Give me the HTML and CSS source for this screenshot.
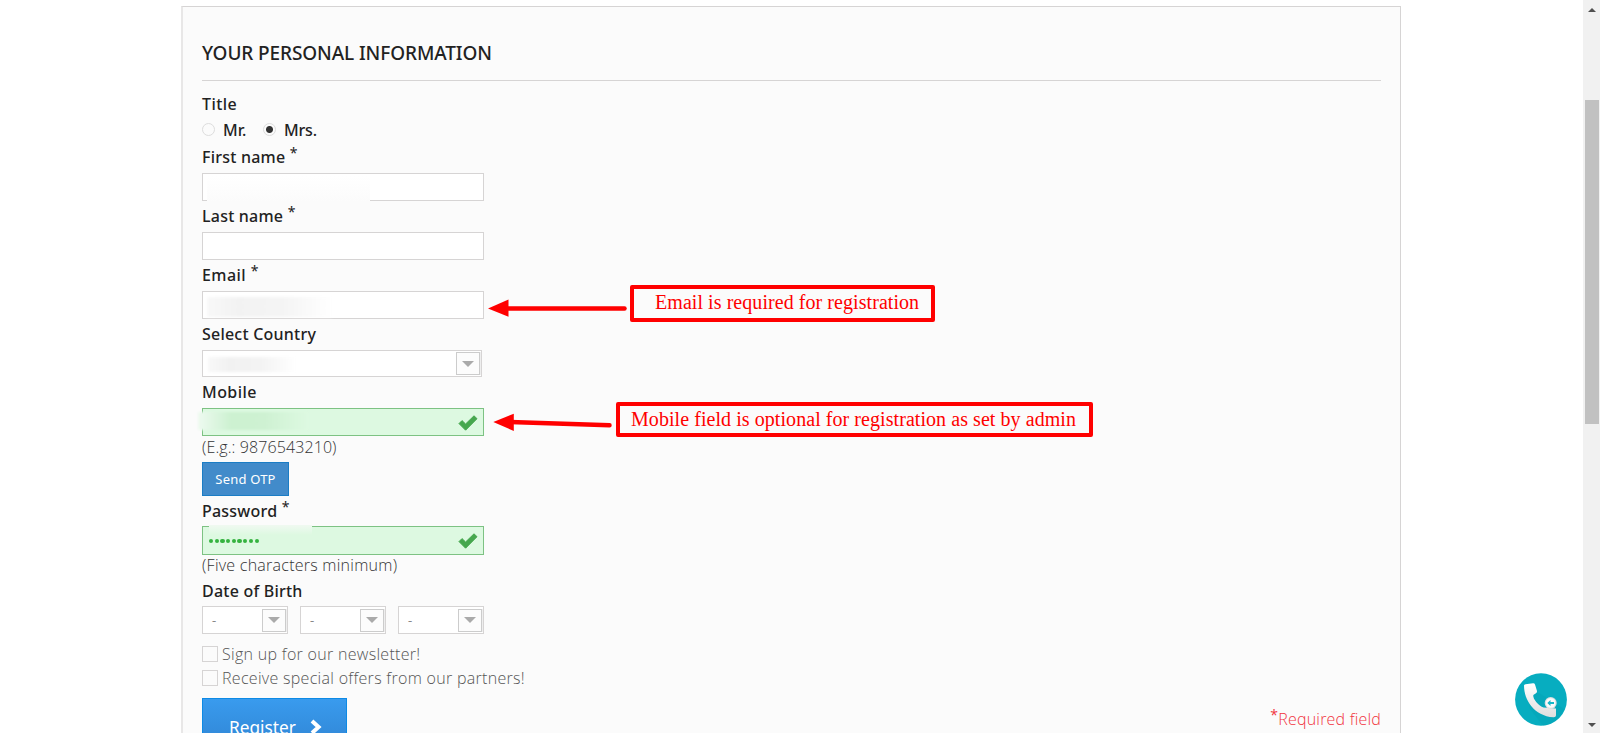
FILE: index.html
```
<!DOCTYPE html>
<html lang="en">
  <head>
    <meta charset="UTF-8" />
    <meta name="viewport" content="width=device-width, initial-scale=1.0" />
    <title>Create an account</title>
    <link rel="stylesheet" href="styles.css">
  </head>
  <body>
    <div class="page">
      <form class="account-form">
        <h3 class="page-subheading">Your personal information</h3>

        <div class="label title-label wide">Title</div>
        <div class="radio-row">
          <span class="radio"></span><label class="mr">Mr.</label>
          <span class="radio checked"></span><label class="mrs">Mrs.</label>
        </div>

        <div class="label">First name <sup>*</sup></div>
        <div class="field"><div class="smudge smudge-first"></div></div>

        <div class="label">Last name <sup>*</sup></div>
        <div class="field"></div>

        <div class="label wide">Email <sup>*</sup></div>
        <div class="field"><div class="smudge smudge-email"></div></div>

        <div class="label">Select Country</div>
        <div class="select country">
          <div class="smudge smudge-country"></div>
          <span class="arrow"></span>
        </div>

        <div class="label wide">Mobile</div>
        <div class="field ok">
          <div class="smudge smudge-mobile"></div>
          <svg class="tick" width="20" height="16" viewBox="0 0 20 16"><path d="M1 8.6L4 5.6L7.6 9L16 0.8L19 3.7L7.6 15.2Z" fill="#46a74e" stroke="#46a74e" stroke-linejoin="round"/></svg>
        </div>
        <div class="form-info example">(E.g.: 9876543210)</div>
        <button type="button" class="otp">Send OTP</button>

        <div class="label password-label">Password <sup>*</sup></div>
        <div class="field ok password">
          <div class="smudge smudge-password"></div>
          <div class="dots"><i></i><i></i><i></i><i></i><i></i><i></i><i></i><i></i><i></i></div>
          <svg class="tick" width="20" height="16" viewBox="0 0 20 16"><path d="M1 8.6L4 5.6L7.6 9L16 0.8L19 3.7L7.6 15.2Z" fill="#46a74e" stroke="#46a74e" stroke-linejoin="round"/></svg>
        </div>
        <div class="form-info">(Five characters minimum)</div>

        <div class="label dob-label">Date of Birth</div>
        <div class="dob">
          <div class="select"><span class="dash">-</span><span class="arrow"></span></div>
          <div class="select"><span class="dash">-</span><span class="arrow"></span></div>
          <div class="select"><span class="dash">-</span><span class="arrow"></span></div>
        </div>

        <div class="check-row"><span class="box"></span><span>Sign up for our newsletter!</span></div>
        <div class="check-row"><span class="box"></span><span>Receive special offers from our partners!</span></div>

        <div class="submit">
          <button type="button" class="register">
            <span>Register</span>
            <svg width="12" height="16" viewBox="0 0 12 16"><path d="M2 2L8.6 8L2 14" fill="none" stroke="#fff" stroke-width="4"/></svg>
          </button>
          <p class="required"><sup>*</sup>Required field</p>
        </div>
      </form>
    </div>

    <div class="scrollbar">
      <span class="up"></span>
      <span class="thumb"></span>
      <span class="down"></span>
    </div>

    <!-- notes over the form -->
    <svg class="arrows" width="160" height="150" viewBox="480 290 160 150">
      <path d="M505 308.500H624.500" stroke="#f00" stroke-width="4.500" stroke-linecap="round"/>
      <path d="M488 308.500L508.500 299.500V316.700Z" fill="#f00"/>
      <path d="M510 422L609.500 425.300" stroke="#f00" stroke-width="4.500" stroke-linecap="round"/>
      <path d="M493.300 422L513.800 413.800V431Z" fill="#f00"/>
    </svg>
    <div class="note note-email"><span>Email is required for registration</span></div>
    <div class="note note-mobile"><span>Mobile field is optional for registration as set by admin</span></div>

    <svg class="call" width="52" height="54" viewBox="0 0 52 54">
      <defs>
        <linearGradient id="handset" x1="0" y1="0" x2="0" y2="1">
          <stop offset="0" stop-color="#fff"/>
          <stop offset="1" stop-color="#dedede"/>
        </linearGradient>
      </defs>
      <ellipse cx="26" cy="26.500" rx="25.900" ry="26.200" fill="#07adc0"/>
      <path d="M12 15Q18 20 24 20L49 36Q43 51 28 52.500L15 36Z" fill="#04a3b6" opacity=".5"/>
      <path d="M9 12.500Q9 11.500 10.500 11.200L18 10.200Q19.500 10 20 11.500L22 18Q22.300 19.500 21 20.200L18.300 22C17.500 26 24 33 28.500 34.500L41 35.500L41 42.500Q40.800 44.500 38.500 44.300C19 43 9 27 9 12.500Z" fill="url(#handset)"/>
      <circle cx="35.700" cy="30" r="6" fill="#dcdfe0"/>
      <circle cx="35.700" cy="30" r="4.800" fill="#fbfbfb"/>
      <path d="M32.300 30L35.500 27V29H39V31H35.500V33Z" fill="#18b7c8"/>
    </svg>
  </body>
</html>
```
FILE: styles.css
```
* {
  margin: 0;
  padding: 0;
  box-sizing: border-box;
}
body {
  display: flex;
  height: 733px;
  overflow: hidden;
  background: white;
  color: #222;
  font-family: "Noto Sans", sans-serif;
  font-size: 16px;
}
.page {
  width: 1583px;
  height: 733px;
  overflow: hidden;
  padding-top: 6px;
}
.account-form {
  width: 1220px;
  height: 800px;
  margin-left: 181px;
  padding: 0 19px;
  border: 1px solid #d6d4d4;
  border-left: 2px solid #e8e7e7;
  background: #fbfbfb;
}
.page-subheading {
  height: 74px;
  padding-top: 33px;
  border-bottom: 1px solid #d6d4d4;
  margin-bottom: 11px;
  line-height: 26px;
  font-size: 19px;
  font-weight: 500;
  letter-spacing: -0.1px;
  text-transform: uppercase;
}
.label {
  height: 31px;
  line-height: 31px;
  font-weight: 500;
  letter-spacing: 0.22px;
  white-space: nowrap;
}
.label.wide {
  letter-spacing: 0.45px;
}
.title-label {
  height: 24px;
  line-height: 24px;
}
sup {
  font-size: 14px;
  line-height: 0;
  font-weight: 400;
  vertical-align: 5px;
}
.radio-row {
  height: 26px;
  padding-top: 1px;
  display: flex;
  align-items: center;
  font-weight: 500;
}
.radio {
  width: 13px;
  height: 13px;
  margin-right: 8px;
  border: 1px solid #ddd;
  border-radius: 50%;
}
.radio.checked {
  background: radial-gradient(circle, #333 3px, #fbfbfb 4px);
}
.mr {
  width: 40px;
}
.mrs {
  letter-spacing: -0.2px;
}
.field {
  position: relative;
  width: 282px;
  height: 28px;
  border: 1px solid #d6d4d4;
  background: white;
}
.field.ok {
  border-color: #7dc283;
  background: #ddf9e1;
}
.select {
  position: relative;
  display: flex;
  align-items: center;
  justify-content: space-between;
  width: 86px;
  height: 28px;
  padding: 1px 1px 1px 9px;
  border: 1px solid #d6d4d4;
  background: white;
}
.select.country {
  width: 280px;
  height: 27px;
}
.arrow {
  display: flex;
  align-items: center;
  justify-content: center;
  width: 24px;
  height: 23px;
  margin-left: auto;
  border: 1px solid #ccc;
  background: #fcfcfc;
  box-shadow: 1px 0 #eee;
}
.arrow::after {
  content: "";
  border: 6px solid transparent;
  border-top-color: #aaa;
  border-bottom: 0;
}
.dash {
  font-size: 13px;
  color: #888;
}
.tick {
  position: absolute;
  right: 5px;
  top: 6px;
}
.form-info {
  height: 25px;
  line-height: 20px;
  font-family: "Open Sans", sans-serif;
  font-weight: 300;
  letter-spacing: 0.25px;
  color: #333;
  white-space: nowrap;
}
.form-info.example {
  height: 26px;
  line-height: 22px;
  letter-spacing: 0.1px;
}
.otp {
  display: block;
  width: 87px;
  height: 34px;
  border: 1px solid #1b7dc5;
  background: #428bca;
  color: white;
  font: 13px "Noto Sans", sans-serif;
  letter-spacing: 0.2px;
}
.password-label {
  height: 30px;
}
.password {
  height: 29px;
}
.dots {
  display: flex;
  gap: 1.4px;
  padding: 12px 0 0 6px;
}
.dots i {
  width: 4.3px;
  height: 4.3px;
  border-radius: 50%;
  background: #35b33f;
}
.dob-label {
  height: 26px;
  line-height: 22px;
}
.dob {
  display: flex;
  gap: 12px;
  margin-bottom: 8px;
}
.check-row {
  display: flex;
  align-items: center;
  height: 24px;
  font-family: "Open Sans", sans-serif;
  font-weight: 300;
  letter-spacing: 0.3px;
  color: #555;
  white-space: nowrap;
}
.box {
  width: 16px;
  height: 16px;
  margin-right: 4px;
  border: 1px solid #d6d4d4;
}
.submit {
  display: flex;
  justify-content: space-between;
  margin-top: 8px;
}
.register {
  display: flex;
  align-items: center;
  gap: 14px;
  width: 145px;
  height: 58px;
  padding-left: 26px;
  border: 1px solid #0d8ae5;
  background: linear-gradient(#399bee, #2f82d0);
  color: white;
  font: 17.3px "Noto Sans", sans-serif;
}
.required {
  padding-top: 10px;
  line-height: 22px;
  font-family: "Open Sans", sans-serif;
  font-weight: 300;
  letter-spacing: 0.2px;
  color: #f13340;
}

/* blurred out values */
.smudge {
  position: absolute;
}
.smudge-first {
  left: 4px;
  top: 2px;
  width: 163px;
  height: 26px;
  background: linear-gradient(white, #fbfbfb);
}
.smudge-email {
  left: 4px;
  top: 5px;
  width: 125px;
  height: 20px;
  background: linear-gradient(to right, #f8f8f8, #f2f2f2 25%, #f4f4f4 60%, white);
  filter: blur(1.5px);
}
.smudge-country {
  left: 5px;
  top: 6px;
  width: 88px;
  height: 15px;
  background: linear-gradient(to right, #f8f8f8, #f1f1f1 25%, #f3f3f3 60%, white);
  filter: blur(1.5px);
}
.smudge-mobile {
  left: -5px;
  top: 3px;
  width: 110px;
  height: 18px;
  background: linear-gradient(to right, #eefaf0, #cdf1d1 30%, #cef1d2 60%, #ddf9e1);
  filter: blur(1px);
}
.smudge-password {
  left: 6px;
  top: -2px;
  width: 103px;
  height: 10px;
  background: linear-gradient(#f0f9f1, #ddf9e1);
}

.note {
  position: absolute;
  border: 4px solid red;
  border-radius: 2px;
  color: red;
  font-family: "Liberation Serif", serif;
  font-size: 20px;
  letter-spacing: 0.06px;
  white-space: nowrap;
}
.note-email {
  left: 630px;
  top: 285px;
  width: 305px;
  height: 37px;
  padding-left: 21px;
  line-height: 27px;
}
.note-mobile {
  left: 616px;
  top: 402px;
  width: 477px;
  height: 35px;
  padding-left: 11px;
  line-height: 26px;
}
.arrows {
  position: absolute;
  left: 480px;
  top: 290px;
}
.call {
  position: absolute;
  left: 1515px;
  top: 673px;
}

.scrollbar {
  display: flex;
  flex-direction: column;
  align-items: center;
  width: 17px;
  padding: 8px 0 6px;
  background: #f1f1f1;
}
.up,
.down {
  border: 4px solid transparent;
}
.up {
  border-top: 0;
  border-bottom-color: #505050;
}
.down {
  margin-top: auto;
  border-bottom: 0;
  border-top-color: #505050;
}
.thumb {
  width: 14px;
  height: 324px;
  margin-top: 88px;
  background: #c1c1c1;
}
```
